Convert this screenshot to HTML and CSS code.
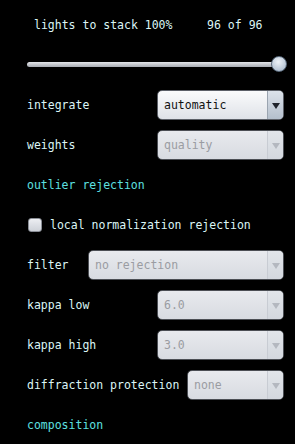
FILE: index.html
```html
<!DOCTYPE html>
<html lang="en">
<head>
  <meta charset="UTF-8" />
  <meta name="viewport" content="width=device-width, initial-scale=1.0" />
  <title>stack options</title>
  <link rel="stylesheet" href="styles.css">
</head>
<body>
  <div class="panel">
    <div class="stack-info">lights to stack 100%     96 of 96</div>

    <div class="slider">
      <div class="track"></div>
      <div class="thumb"></div>
    </div>

    <div class="row">
      <span class="label">integrate</span>
      <div class="select active">
        <span class="value">automatic</span>
        <span class="arrow"></span>
      </div>
    </div>

    <div class="row">
      <span class="label">weights</span>
      <div class="select disabled">
        <span class="value">quality</span>
        <span class="arrow"></span>
      </div>
    </div>

    <div class="row">
      <span class="section">outlier rejection</span>
    </div>

    <div class="row">
      <span class="checkbox"></span>
      <span class="label">local normalization rejection</span>
    </div>

    <div class="row">
      <span class="label">filter</span>
      <div class="select disabled wide">
        <span class="value">no rejection</span>
        <span class="arrow"></span>
      </div>
    </div>

    <div class="row">
      <span class="label">kappa low</span>
      <div class="select disabled">
        <span class="value">6.0</span>
        <span class="arrow"></span>
      </div>
    </div>

    <div class="row">
      <span class="label">kappa high</span>
      <div class="select disabled">
        <span class="value">3.0</span>
        <span class="arrow"></span>
      </div>
    </div>

    <div class="row">
      <span class="label">diffraction protection</span>
      <div class="select disabled narrow">
        <span class="value">none</span>
        <span class="arrow"></span>
      </div>
    </div>

    <div class="row">
      <span class="section">composition</span>
    </div>
  </div>
</body>
</html>
```

FILE: styles.css
```css
* {
  box-sizing: border-box;
  margin: 0;
  padding: 0;
}

body {
  background: #000;
  font-family: 'DejaVu Sans Mono', monospace;
  font-size: 11.5px;
  color: #dcf6f6;
}

.panel {
  width: 295px;
  height: 444px;
  overflow: hidden;
}

.stack-info {
  white-space: pre;
  padding: 18px 0 0 34px;
  height: 40px;
  line-height: 14px;
}

.slider {
  position: relative;
  height: 45px;
  margin: 0 8px 0 27px;
}

.track {
  position: absolute;
  left: 0;
  right: 2px;
  top: 22px;
  height: 5px;
  border-radius: 3px;
  background: linear-gradient(#e4e6ea, #a7abb2);
}

.thumb {
  position: absolute;
  right: 0;
  top: 16px;
  width: 16px;
  height: 16px;
  border-radius: 50%;
  border: 1px solid #5a6a7c;
  background: radial-gradient(circle at 45% 35%, #eef3f8, #b8c6d6 70%, #93a5ba);
}

.row {
  display: flex;
  align-items: center;
  height: 40px;
  padding: 0 11px 0 27px;
}

.section {
  color: #5ee0e0;
}

.select {
  margin-left: auto;
  display: flex;
  align-items: center;
  width: 127px;
  height: 30px;
  border-radius: 5px;
  border: 1px solid #6c7078;
  overflow: hidden;
}

.select.wide {
  width: 196px;
}

.select.narrow {
  width: 97px;
}

.select .value {
  flex: 1;
  padding-left: 6px;
}

.select .arrow {
  width: 16px;
  height: 100%;
  border-left: 1px solid #b9bec8;
  position: relative;
}

.select .arrow::after {
  content: '';
  position: absolute;
  left: 4px;
  top: 12px;
  border-left: 4px solid transparent;
  border-right: 4px solid transparent;
  border-top: 6px solid #20242c;
}

.active {
  background: linear-gradient(#fafbfc, #dfe2e8);
  color: #111;
  border-color: #5c6068;
}

.active .arrow {
  background: linear-gradient(#dce2ea, #b4bfcc);
  border-left-color: #9aa4b0;
}

.disabled {
  background: linear-gradient(#e8eaee, #d8dbe1);
  color: #9a9ca2;
  border-color: #4c4f55;
}

.disabled .arrow {
  background: linear-gradient(#e2e5ea, #d3d7de);
  border-left-color: #c8ccd3;
}

.disabled .arrow::after {
  border-top-color: #b4b8c0;
}

.checkbox {
  width: 14px;
  height: 14px;
  margin: 0 8px 0 1px;
  border-radius: 3px;
  border: 1px solid #8a8e96;
  background: linear-gradient(#eceef2, #cdd1d8);
}
```
